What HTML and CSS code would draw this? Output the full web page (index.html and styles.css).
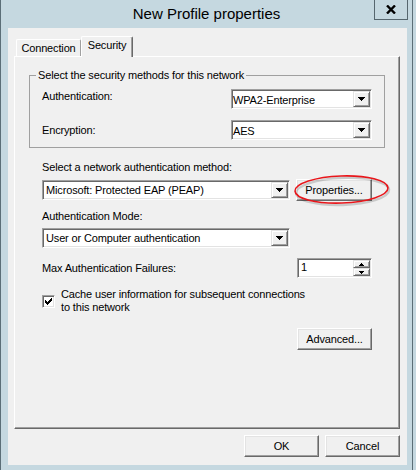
FILE: index.html
```html
<!DOCTYPE html>
<html lang="en">
<head>
<meta charset="utf-8">
<title>New Profile properties</title>
<link rel="stylesheet" href="styles.css">
</head>
<body>
<div class="window">
  <div class="titlebar">
    <span class="title">New Profile properties</span>
    <button class="close" aria-label="Close">
      <svg width="10" height="9" viewBox="0 0 10 9"><path d="M1 0.5 L9 8.5 M9 0.5 L1 8.5" stroke="#000" stroke-width="2.4" fill="none"/></svg>
    </button>
  </div>
  <div class="client">
    <div class="tabs">
      <div class="tab conn">Connection</div>
      <div class="tab active">Security</div>
    </div>
    <div class="tabpage">
      <fieldset class="group">
        <legend>Select the security methods for this network</legend>
        <div class="field-row">
          <span class="label raised">Authentication:</span>
          <div class="combo short">
            <span class="combo-text">WPA2-Enterprise</span>
            <span class="drop-btn"><svg width="7" height="4" viewBox="0 0 7 4"><path d="M0 0h7v1H0zM1 1h5v1H1zM2 2h3v1H2zM3 3h1v1H3z"/></svg></span>
          </div>
        </div>
        <div class="field-row">
          <span class="label">Encryption:</span>
          <div class="combo short">
            <span class="combo-text">AES</span>
            <span class="drop-btn"><svg width="7" height="4" viewBox="0 0 7 4"><path d="M0 0h7v1H0zM1 1h5v1H1zM2 2h3v1H2zM3 3h1v1H3z"/></svg></span>
          </div>
        </div>
      </fieldset>

      <div class="text-line method-label">Select a network authentication method:</div>
      <div class="method-row">
        <div class="combo wide list">
          <span class="combo-text">Microsoft: Protected EAP (PEAP)</span>
          <span class="drop-btn"><svg width="7" height="4" viewBox="0 0 7 4"><path d="M0 0h7v1H0zM1 1h5v1H1zM2 2h3v1H2zM3 3h1v1H3z"/></svg></span>
        </div>
        <button class="btn props">Properties...</button>
        <svg class="highlight" width="98" height="35" viewBox="0 0 98 35">
          <g transform="rotate(-2 48.5 15.5)">
            <ellipse cx="49.5" cy="17.5" rx="46.5" ry="13.5" fill="none" stroke="#000" stroke-opacity="0.16" stroke-width="2.5"/>
            <ellipse cx="48.5" cy="15.5" rx="46.5" ry="13.5" fill="none" stroke="#e8161b" stroke-width="1.6"/>
          </g>
        </svg>
      </div>

      <div class="text-line mode-label">Authentication Mode:</div>
      <div class="combo wide list mode-combo">
        <span class="combo-text">User or Computer authentication</span>
        <span class="drop-btn"><svg width="7" height="4" viewBox="0 0 7 4"><path d="M0 0h7v1H0zM1 1h5v1H1zM2 2h3v1H2zM3 3h1v1H3z"/></svg></span>
      </div>

      <div class="field-row failures">
        <span class="label">Max Authentication Failures:</span>
        <div class="spinner">
          <span class="spin-value">1</span>
          <span class="spin-btns">
            <span class="spin-btn"><svg width="5" height="3" viewBox="0 0 5 3"><path d="M2 0h1v1H2zM1 1h3v1H1zM0 2h5v1H0z"/></svg></span>
            <span class="spin-btn"><svg width="5" height="3" viewBox="0 0 5 3"><path d="M0 0h5v1H0zM1 1h3v1H1zM2 2h1v1H2z"/></svg></span>
          </span>
        </div>
      </div>

      <label class="check-row">
        <span class="checkbox"><svg width="7" height="7" viewBox="0 0 7 7"><path d="M6 0h1v1H6zM5 1h2v1H5zM0 2h1v1H0zM4 2h3v1H4zM0 3h2v1H0zM3 3h3v1H3zM0 4h5v1H0zM1 5h3v1H1zM2 6h1v1H2z"/></svg></span>
        <span class="check-text">Cache user information for subsequent connections<br>to this network</span>
      </label>

      <div class="adv-row"><button class="btn adv">Advanced...</button></div>
    </div>
    <div class="footer">
      <button class="btn dlg">OK</button>
      <button class="btn dlg">Cancel</button>
    </div>
  </div>
</div>
</body>
</html>
```
FILE: styles.css
```css
* { box-sizing: border-box; }

html, body {
  margin: 0;
  height: 100%;
}

body {
  background: #c5d8e0;
  font-family: "Liberation Sans", Arial, sans-serif;
  font-size: 11px;
  letter-spacing: -0.15px;
  color: #000;
  overflow: hidden;
}

.window {
  width: 413px;
  height: 470px;
  background: #c5d8e0;
  border-left: 1px solid #5b6e77;
  border-right: 1px solid #5b6e77;
  padding: 0 5px 0 7px;
}

/* ---------- title bar ---------- */
.titlebar {
  display: grid;
  grid-template-columns: 1fr auto 1fr;
  height: 28px;
  margin: 0 -5px 0 -7px;
}

.title {
  grid-column: 2;
  font-size: 15px;
  line-height: 28px;
  letter-spacing: 0;
  white-space: nowrap;
  color: #000;
}

.close {
  grid-column: 3;
  justify-self: end;
  align-self: start;
  width: 34px;
  height: 20px;
  margin-right: 4px;
  padding: 0;
  border: 1px solid #56666e;
  border-top: 0;
  background: transparent;
  display: flex;
  align-items: center;
  justify-content: center;
}

/* ---------- client area ---------- */
.client {
  background: #f0f0f0;
  height: 437px;
  padding: 8px 7px 8px 6px;
}

.tabs {
  display: flex;
  align-items: flex-end;
  padding-left: 2px;
}

.tab {
  height: 17px;
  display: flex;
  align-items: center;
  justify-content: center;
  border: 1px solid;
  border-color: #fff #696969 transparent #fff;
  border-bottom: 0;
  border-radius: 2px 2px 0 0;
  white-space: nowrap;
}

.tab.conn {
  width: 65px;
  border-right-color: #a0a0a0;
}

.tab.active {
  width: 52px;
  height: 21px;
  margin-bottom: -1px;
  padding-bottom: 4px;
  position: relative;
  z-index: 1;
  background: #f0f0f0;
  box-shadow: inset -1px 0 #a0a0a0;
}

.tabpage {
  height: 373px;
  background: #f0f0f0;
  border: 1px solid;
  border-color: #fff #696969 #696969 #fff;
  box-shadow: inset -1px -1px #a0a0a0;
  padding: 0 14px;
  display: flex;
  flex-direction: column;
}

/* ---------- group box ---------- */
.group {
  margin: 12px 0 0;
  padding: 7px 12px 7px;
  border: 1px solid #a0a0a0;
  min-width: 0;
}

.group legend {
  padding: 0 2px;
  margin-left: -6px;
  line-height: 13px;
  white-space: nowrap;
}

.field-row {
  display: flex;
  align-items: center;
  justify-content: space-between;
}

.field-row + .field-row { margin-top: 11px; }

.label {
  line-height: 13px;
  white-space: nowrap;
}

.label.raised {
  align-self: flex-start;
  margin-top: 1px;
}

/* ---------- combos ---------- */
.combo {
  display: flex;
  align-items: stretch;
  height: 20px;
  padding: 1px;
  background: #fff;
  border: 1px solid;
  border-color: #a0a0a0 #fff #fff #a0a0a0;
  box-shadow: inset 1px 1px #696969, inset -1px -1px #e3e3e3;
}

.combo.short { width: 141px; }
.combo.short .combo-text { padding-top: 2px; }
.combo.wide { width: 248px; }
.combo.list .combo-text { padding-left: 2px; }

.combo-text {
  flex: 1;
  display: flex;
  align-items: center;
  white-space: nowrap;
  overflow: hidden;
}

.drop-btn {
  flex: none;
  width: 17px;
  display: flex;
  align-items: center;
  justify-content: center;
  background: #f0f0f0;
  border: 1px solid;
  border-color: #e3e3e3 #696969 #696969 #e3e3e3;
  box-shadow: inset 1px 1px #fff, inset -1px -1px #a0a0a0;
}

.drop-btn svg { display: block; fill: #000; }

/* ---------- buttons ---------- */
.btn {
  height: 22px;
  padding: 0;
  background: #f0f0f0;
  color: #000;
  font-family: inherit;
  font-size: inherit;
  letter-spacing: inherit;
  border: 1px solid;
  border-color: #fff #696969 #696969 #fff;
  box-shadow: inset -1px -1px #a0a0a0, inset 1px 1px #e3e3e3;
  white-space: nowrap;
}

.props { width: 76px; }
.adv { width: 75px; }
.dlg { width: 75px; }

/* ---------- lower rows ---------- */
.text-line {
  line-height: 13px;
  margin: 0 13px;
  white-space: nowrap;
}

.method-label { margin-top: 13px; }

.method-row {
  position: relative;
  display: flex;
  align-items: center;
  justify-content: space-between;
  height: 22px;
  margin: 5px 13px 0;
}

.highlight {
  position: absolute;
  left: 251px;
  top: -5px;
  pointer-events: none;
  overflow: visible;
}

.mode-label { margin-top: 9px; }

.mode-combo { margin: 5px 13px 0; }

.failures {
  margin: 10px 13px 0;
  height: 20px;
}

.spinner {
  width: 75px;
  height: 20px;
  display: flex;
  align-items: stretch;
  padding: 1px;
  background: #fff;
  border: 1px solid;
  border-color: #a0a0a0 #fff #fff #a0a0a0;
  box-shadow: inset 1px 1px #696969, inset -1px -1px #e3e3e3;
}

.spin-value {
  flex: 1;
  display: flex;
  align-items: center;
  padding: 0 0 2px 2px;
}

.spin-btns {
  flex: none;
  width: 17px;
  display: flex;
  flex-direction: column;
}

.spin-btn {
  flex: 1;
  display: flex;
  align-items: center;
  justify-content: center;
  background: #f0f0f0;
  border: 1px solid;
  border-color: #e3e3e3 #696969 #696969 #e3e3e3;
  box-shadow: inset 1px 1px #fff, inset -1px -1px #a0a0a0;
}

.spin-btn svg { display: block; fill: #000; }

.check-row {
  display: flex;
  align-items: center;
  gap: 6px;
  margin: 10px 13px 0;
}

.checkbox {
  flex: none;
  width: 13px;
  height: 13px;
  display: flex;
  align-items: center;
  justify-content: center;
  background: #fff;
  border: 1px solid;
  border-color: #a0a0a0 #fff #fff #a0a0a0;
  box-shadow: inset 1px 1px #696969, inset -1px -1px #e3e3e3;
}

.checkbox svg { display: block; fill: #000; }

.check-text {
  line-height: 13px;
  white-space: nowrap;
}

.adv-row {
  display: flex;
  justify-content: flex-end;
  margin: 14px 13px 0;
}

/* ---------- footer ---------- */
.footer {
  display: flex;
  justify-content: flex-end;
  gap: 6px;
  margin-top: 6px;
}
```
